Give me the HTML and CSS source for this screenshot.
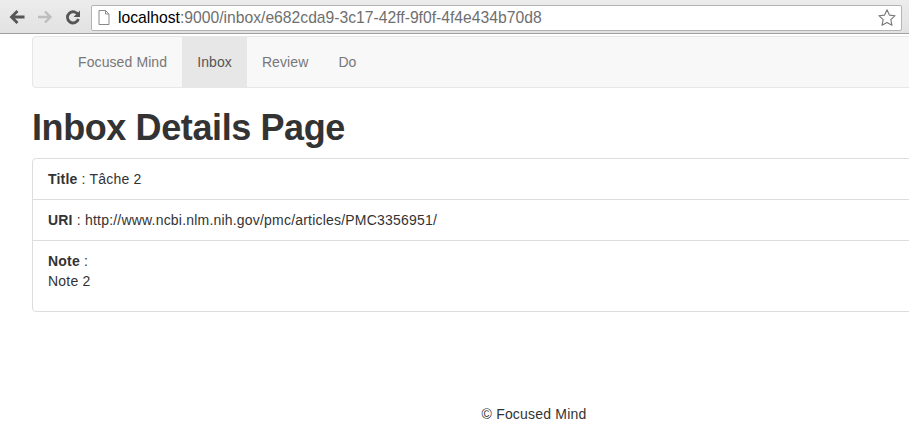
FILE: index.html
```html
<!DOCTYPE html>
<html>
<head>
<meta charset="utf-8">
<link rel="stylesheet" href="styles.css">
</head>
<body>
<div class="chrome">
  <div class="nav-btns">
    <svg class="btn" width="20" height="20" viewBox="0 0 20 20"><path d="M17.5 10H5M10.5 4L4.5 10 10.5 16" fill="none" stroke="#555" stroke-width="2.8"/></svg>
    <svg class="btn" width="20" height="20" viewBox="0 0 20 20"><path d="M3 10h12M10 4.5l5.5 5.5L10 15.5" fill="none" stroke="#bdbdbd" stroke-width="2.4"/></svg>
    <svg class="btn" width="20" height="20" viewBox="0 0 20 20"><path d="M15.2 8.2A5.6 5.6 0 1 0 15.4 12" fill="none" stroke="#555" stroke-width="2.8"/><path d="M17 3.5V10h-6.5z" fill="#555"/></svg>
  </div>
  <div class="omnibox">
    <svg class="page-ico" width="12" height="15" viewBox="0 0 12 15"><path d="M1 .5h6.5L11 4v10.5H1z M7.5 .5V4H11" fill="#fff" stroke="#8a8a8a"/></svg>
    <span class="url"><span class="host">localhost</span>:9000/inbox/e682cda9-3c17-42ff-9f0f-4f4e434b70d8</span>
    <svg class="star" width="20" height="20" viewBox="0 0 20 20"><path d="M10 1.8l2.4 5.3 5.7.6-4.3 3.9 1.2 5.7L10 14.4l-5 2.9 1.2-5.7L1.9 7.7l5.7-.6z" fill="none" stroke="#777" stroke-width="1.1" stroke-linejoin="round"/></svg>
  </div>
</div>
<div class="page">
  <nav class="navbar">
    <ul class="nav">
      <li><a>Focused Mind</a></li>
      <li class="active"><a>Inbox</a></li>
      <li><a>Review</a></li>
      <li><a>Do</a></li>
    </ul>
  </nav>
  <h1 class="title">Inbox Details Page</h1>
  <div class="panel">
    <div class="item"><strong>Title</strong> : Tâche 2</div>
    <div class="item"><strong>URI</strong> : http://www.ncbi.nlm.nih.gov/pmc/articles/PMC3356951/</div>
    <div class="item"><strong>Note</strong> :<p class="note">Note 2</p></div>
  </div>
  <footer class="footer">© Focused Mind</footer>
</div>
</body>
</html>
```
FILE: styles.css
```css
html, body {
  margin: 0;
  padding: 0;
  overflow: hidden;
  background: #fff;
  font-family: "Liberation Sans", Arial, sans-serif;
  font-size: 14px;
  line-height: 20px;
  color: #333;
}
.chrome {
  height: 34px;
  background: linear-gradient(#ececec, #e2e2e2);
  border-bottom: 1px solid #a0a0a0;
  display: flex;
  align-items: center;
  box-sizing: border-box;
}
.nav-btns {
  display: flex;
  gap: 8px;
  padding-left: 7px;
  width: 84px;
  box-sizing: border-box;
}
.btn { display: block; }
.omnibox {
  height: 26px;
  width: 811px;
  margin-left: 7px;
  background: #fff;
  border: 1px solid #b4b4b4;
  border-radius: 2px;
  box-sizing: border-box;
  display: flex;
  align-items: center;
  padding-left: 6px;
  margin-top: 2px;
}
.page-ico { display: block; margin-right: 8px; }
.url {
  font-family: "Liberation Sans", Arial, sans-serif;
  font-size: 15.7px;
  color: #6f6f6f;
  flex: 1;
}
.host { color: #000; }
.star { margin-right: 4px; }
.page {
  padding-left: 32px;
  padding-top: 2px;
  width: 1200px;
  letter-spacing: 0.2px;
}
.navbar {
  height: 52px;
  background: #f8f8f8;
  border: 1px solid #e7e7e7;
  border-radius: 4px;
  box-sizing: border-box;
  padding-left: 30px;
}
.nav {
  list-style: none;
  margin: 0;
  padding: 0;
  display: flex;
  letter-spacing: 0.1px;
}
.nav a {
  display: block;
  padding: 15px;
  color: #777;
  line-height: 20px;
}
.nav .active a {
  background: #e7e7e7;
  color: #555;
}
.title {
  font-size: 36px;
  font-weight: 700;
  letter-spacing: -0.4px;
  line-height: 39.6px;
  margin: 20px 0 10px;
  color: #333;
}
.panel {
  border: 1px solid #ddd;
  border-radius: 4px;
}
.item {
  padding: 10px 15px;
  border-top: 1px solid #ddd;
}
.item:first-child { border-top: 0; }
.note { margin: 0 0 10px; }
.footer {
  width: 1004px;
  text-align: center;
  margin-top: 92px;
}
```
